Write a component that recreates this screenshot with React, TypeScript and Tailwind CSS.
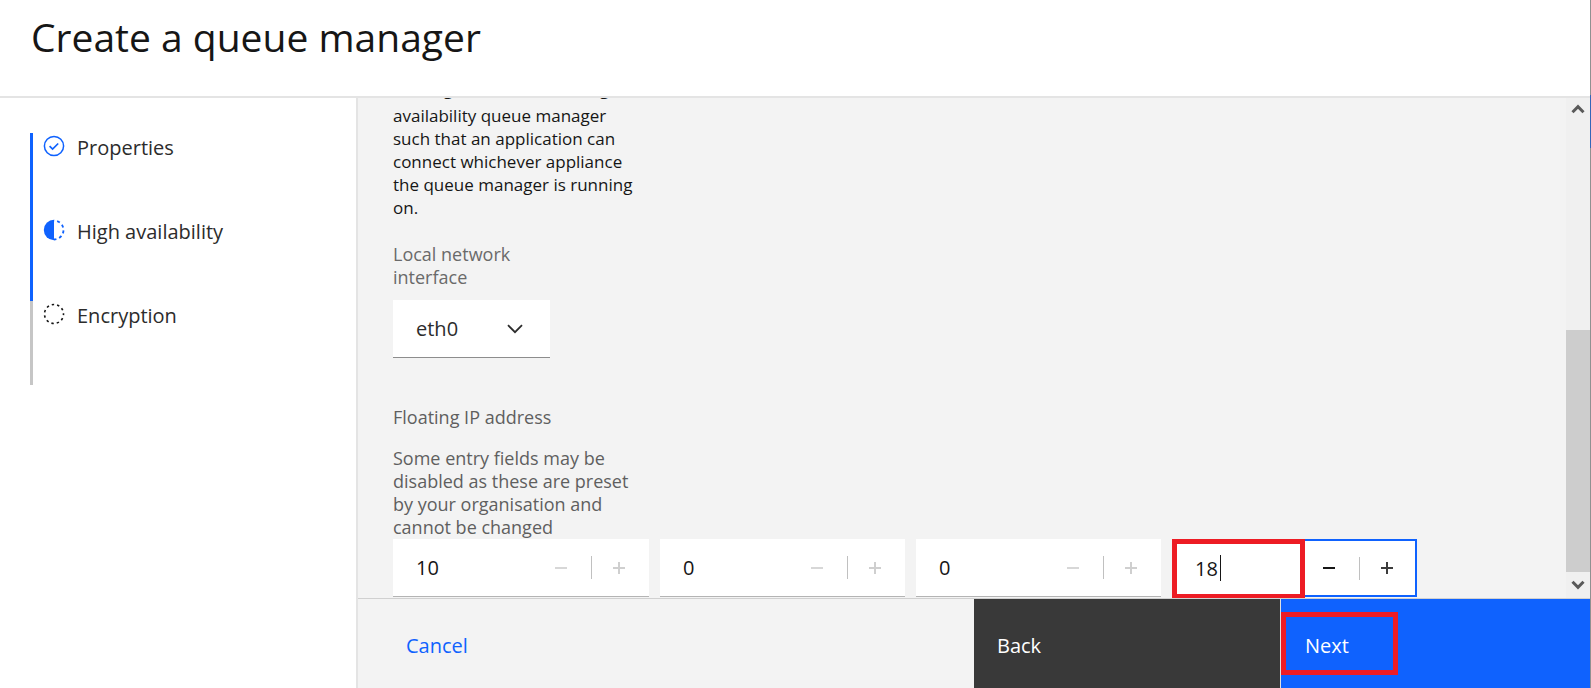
import { useState } from "react";

type Octet = { id: string; label: string; value: string; editable?: boolean; width: string };

const octets: Octet[] = [
  { id: "octet-1", label: "First octet", value: "10", width: "w-64" },
  { id: "octet-2", label: "Second octet", value: "0", width: "w-[245px]" },
  { id: "octet-3", label: "Third octet", value: "0", width: "w-[245px]" },
  { id: "octet-4", label: "Fourth octet", value: "18", editable: true, width: "w-[245px]" },
];

function CompleteIcon() {
  return (
    <svg viewBox="0 0 22 22" className="size-[22px]" fill="none" stroke="#0f62fe" aria-hidden="true">
      <circle cx="11" cy="11" r="9.6" strokeWidth="1.5" />
      <path d="M6.6 11.1l3 3 5.6-5.6" strokeWidth="1.7" />
    </svg>
  );
}

function CurrentIcon() {
  return (
    <svg viewBox="0 0 22 22" className="size-[22px]" aria-hidden="true">
      <path d="M11 0.8a10.2 10.2 0 0 0 0 20.4z" fill="#0f62fe" />
      <path
        d="M11 1.5a9.5 9.5 0 0 1 0 19"
        fill="none"
        stroke="#0f62fe"
        strokeWidth="1.8"
        strokeDasharray="3 3"
        strokeDashoffset="-3.2"
      />
    </svg>
  );
}

function IncompleteIcon() {
  return (
    <svg viewBox="0 0 22 22" className="size-[22px]" aria-hidden="true">
      <circle
        cx="11"
        cy="11"
        r="9.5"
        fill="none"
        stroke="#161616"
        strokeWidth="1.6"
        strokeDasharray="2.4 3.026"
        strokeDashoffset="1.2"
      />
    </svg>
  );
}

function Arrow({ up = false }: { up?: boolean }) {
  return (
    <svg viewBox="0 0 14 10" className="h-[10px] w-[14px]" fill="none" stroke="#5a5a5a" strokeWidth="3" aria-hidden="true">
      <path d={up ? "M1.5 8.2L7 2.7l5.5 5.5" : "M1.5 1.8L7 7.3l5.5-5.5"} />
    </svg>
  );
}

function OctetField({ octet }: { octet: Octet }) {
  const [value, setValue] = useState(octet.value);
  const step = (by: number) =>
    setValue((v) => String(Math.min(255, Math.max(0, Number(v) + by))));
  const on = octet.editable;
  return (
    <div
      className={`relative flex h-[58px] items-center bg-white ${octet.width} ${
        on ? "outline-2 -outline-offset-2 outline-[#0f62fe]" : "border-b border-[#b4b4b4]"
      }`}
    >
      <input
        id={octet.id}
        aria-label={octet.label}
        type="text"
        inputMode="numeric"
        size={1}
        value={value}
        readOnly={!on}
        onChange={(e) => setValue(e.target.value)}
        className="h-full min-w-0 flex-1 bg-transparent pl-[23px] text-xl text-[#161616] outline-none"
      />
      {on && <span className="absolute left-12 top-4 h-[26px] w-px bg-[#161616]" />}
      <button
        type="button"
        aria-label={`Decrease ${octet.label}`}
        disabled={!on}
        onClick={() => step(-1)}
        className={`flex h-full w-[57px] items-center justify-center pr-1 ${on ? "text-[#161616]" : "text-[#c6c6c6]"}`}
      >
        <svg viewBox="0 0 12 12" className="size-3" aria-hidden="true">
          <path d="M0 6h12" stroke="currentColor" strokeWidth={on ? 2 : 1.4} />
        </svg>
      </button>
      <span className="h-[23px] w-px bg-[#c0c0c0]" />
      <button
        type="button"
        aria-label={`Increase ${octet.label}`}
        disabled={!on}
        onClick={() => step(1)}
        className={`flex h-full w-[57px] items-center justify-center pr-1 ${on ? "text-[#3c3c3c]" : "text-[#cfcfcf]"}`}
      >
        <svg viewBox="0 0 12 12" className="size-3" aria-hidden="true">
          <path d="M0 6h12M6 0v12" stroke="currentColor" strokeWidth="2" />
        </svg>
      </button>
      {on && <span className="pointer-events-none absolute left-0 top-0 h-[60px] w-[133px] border-5 border-[#ed1c24]" />}
    </div>
  );
}

const steps = [
  { name: "Properties", icon: <CompleteIcon />, reached: true },
  { name: "High availability", icon: <CurrentIcon />, reached: true },
  { name: "Encryption", icon: <IncompleteIcon />, reached: false },
];

export default function App() {
  return (
    <div className="flex h-screen bg-white font-['Open_Sans',sans-serif] text-[#161616]">
      <div className="flex min-w-0 flex-1 flex-col">
        <header className="flex h-[98px] shrink-0 items-start border-b-2 border-[#e4e4e4] px-[31px] pt-[7px]">
          <h1 className="text-[39px] leading-[60px]">Create a queue manager</h1>
        </header>

        <div className="flex min-h-0 flex-1">
          <nav aria-label="Progress" className="w-[356px] shrink-0 pl-[30px] pt-[35px]">
            <ol>
              {steps.map((s) => (
                <li
                  key={s.name}
                  className={`flex h-[84px] items-start gap-3 border-l-3 pl-[10px] ${
                    s.reached ? "border-[#0f62fe]" : "border-[#c6c6c6]"
                  }`}
                >
                  <span className="pt-[2px]">{s.icon}</span>
                  <span className="text-xl leading-[30px] text-[#2c2c2c]">{s.name}</span>
                </li>
              ))}
            </ol>
          </nav>

          <div className="flex min-w-0 flex-1 flex-col border-l-2 border-[#e4e4e4] bg-[#f3f3f3]">
            <div className="flex min-h-0 flex-1">
              <main className="flex min-w-0 flex-1 flex-col justify-end overflow-hidden pb-px pl-[35px]">
                <p className="text-[17px] leading-[23px]">
                  <span className="block pb-1">floating IP address for a high</span>
                  availability queue manager
                  <br />
                  such that an application can
                  <br />
                  connect whichever appliance
                  <br />
                  the queue manager is running
                  <br />
                  on.
                </p>

                <label htmlFor="interface" className="mt-6 text-[18px] leading-[23px] text-[#6a6a6a]">
                  Local network
                  <br />
                  interface
                </label>
                <div className="relative mt-[11px] w-[157px]">
                  <select
                    id="interface"
                    defaultValue="eth0"
                    className="block h-[58px] w-full appearance-none border-b border-[#8d8d8d] bg-white pl-[23px] text-xl text-[#2c2c2c] outline-none"
                  >
                    <option>eth0</option>
                  </select>
                  <svg
                    viewBox="0 0 16 10"
                    className="pointer-events-none absolute right-[27px] top-6 h-[10px] w-4"
                    fill="none"
                    stroke="#2c2c2c"
                    strokeWidth="1.8"
                    aria-hidden="true"
                  >
                    <path d="M1 1.2l7 7 7-7" />
                  </svg>
                </div>

                <p className="mt-12 text-[18px] leading-[23px] text-[#5f5f5f]">Floating IP address</p>
                <p className="mt-[18px] text-[18px] leading-[23px] text-[#5f5f5f]">
                  Some entry fields may be
                  <br />
                  disabled as these are preset
                  <br />
                  by your organisation and
                  <br />
                  cannot be changed
                </p>
                <div className="flex gap-[11px]">
                  {octets.map((o) => (
                    <OctetField key={o.id} octet={o} />
                  ))}
                </div>
              </main>

              <div className="flex w-6 shrink-0 flex-col items-center bg-[#f0f0f0]" aria-hidden="true">
                <div className="flex h-[22px] items-center">
                  <Arrow up />
                </div>
                <div className="flex w-full flex-1 flex-col justify-end">
                  <div className="h-[242px] bg-[#cdcdcd]" />
                </div>
                <div className="flex h-[26px] items-center">
                  <Arrow />
                </div>
              </div>
            </div>

            <footer className="grid h-[90px] shrink-0 grid-cols-[616fr_307fr_309fr] border-t border-[#d0d0d0] text-xl">
              <button type="button" className="pl-12 pt-1 text-left text-[#0f62fe]">
                Cancel
              </button>
              <button type="button" className="border-r border-[#e0e0e0] bg-[#393939] pl-[23px] pt-1 text-left text-white">
                Back
              </button>
              <button type="button" className="relative bg-[#0f62fe] pl-6 pt-1 text-left text-white">
                Next
                <span className="pointer-events-none absolute left-0 top-[13px] h-[63px] w-[117px] border-5 border-[#ed1c24]" />
              </button>
            </footer>
          </div>
        </div>
      </div>

      <div className="w-px shrink-0 bg-[#909090] pt-[95px]" aria-hidden="true">
        <div className="h-[53px] bg-[#3566b8]" />
      </div>
    </div>
  );
}
